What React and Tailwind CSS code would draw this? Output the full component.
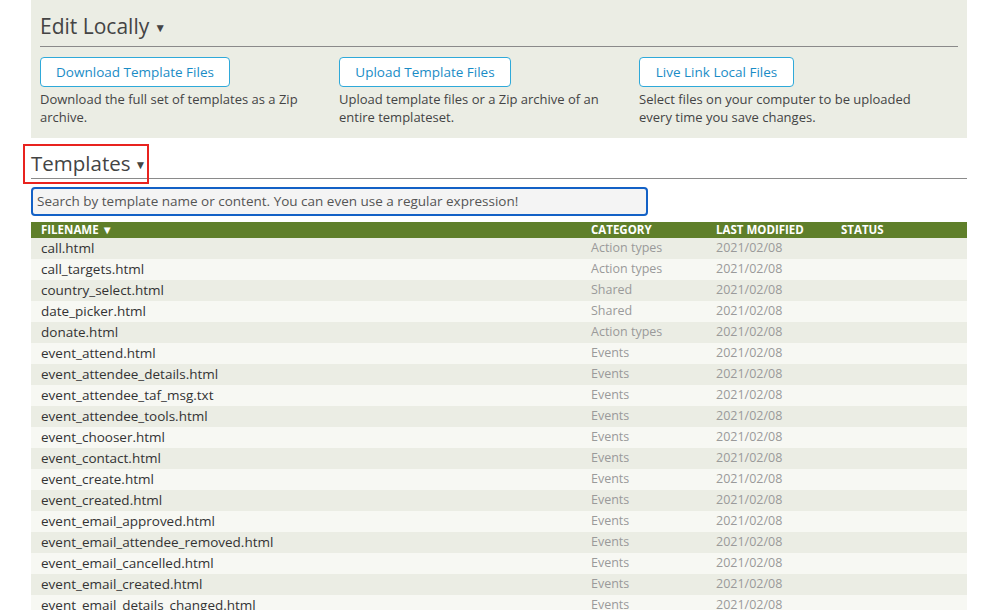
import React from "react";

const rows = [
  ["call.html", "Action types"],
  ["call_targets.html", "Action types"],
  ["country_select.html", "Shared"],
  ["date_picker.html", "Shared"],
  ["donate.html", "Action types"],
  ["event_attend.html", "Events"],
  ["event_attendee_details.html", "Events"],
  ["event_attendee_taf_msg.txt", "Events"],
  ["event_attendee_tools.html", "Events"],
  ["event_chooser.html", "Events"],
  ["event_contact.html", "Events"],
  ["event_create.html", "Events"],
  ["event_created.html", "Events"],
  ["event_email_approved.html", "Events"],
  ["event_email_attendee_removed.html", "Events"],
  ["event_email_cancelled.html", "Events"],
  ["event_email_created.html", "Events"],
  ["event_email_details_changed.html", "Events"],
  ["event_email_host_message.html", "Events"],
];

const actions = [
  ["Download Template Files", "Download the full set of templates as a Zip archive.", "w-[190px]"],
  ["Upload Template Files", "Upload template files or a Zip archive of an entire templateset.", "w-[172px]"],
  ["Live Link Local Files", "Select files on your computer to be uploaded every time you save changes.", "w-[155px]"],
];

export default function App() {
  return (
    <div className="min-h-screen bg-white font-['Open_Sans',sans-serif] text-[#444]">
      <div className="ml-[31px] w-[936px]">
        <div className="bg-[#ebede4] pl-[9px] pr-[9px] pt-[11px] pb-[12px]">
          <div className="flex items-center border-b border-[#8a8a8a] pb-[6px] h-[36px]">
            <span className="text-[21px] leading-[30px] text-[#444]">Edit Locally</span>
            <span className="ml-[5px] mt-[5px] text-[12px] text-[#444]">▼</span>
          </div>
          <div className="mt-[10px] grid grid-cols-[299px_300px_1fr]">
            {actions.map(([label, desc, w]) => (
              <div key={label} className="pr-[20px]">
                <div className={`${w} h-[30px] flex items-center justify-center rounded-[4px] border border-[#2fa9d9] bg-white text-[13.5px] text-[#1a8cc6]`}>
                  {label}
                </div>
                <p className="mt-[3px] w-[280px] text-[13px] leading-[18px] text-[#444]">{desc}</p>
              </div>
            ))}
          </div>
        </div>

        <div className="mt-[7px] relative">
          <div className="flex items-center h-[34px] border-b border-[#8a8a8a]">
            <span className="mt-[2px] text-[20.5px] leading-[30px] text-[#444]">Templates</span>
            <span className="ml-[4px] mt-[7px] text-[12px] text-[#444]">▼</span>
          </div>
          <div className="absolute left-[-8px] top-[-1px] w-[126px] h-[40px] border-2 border-[#e8231f]" />
        </div>

        <div className="mt-[8px] w-[617px] h-[29px] rounded-[4px] border-2 border-[#1361c6] bg-[#f4f4f4] flex items-center pl-[4px] text-[13.5px] text-[#555]">
          Search by template name or content. You can even use a regular expression!
        </div>

        <div className="mt-[6px]">
          <div className="grid grid-cols-[550px_125px_125px_1fr] pl-[10px] h-[16px] items-center bg-[#5f7f2a] text-[11.5px] font-bold text-white leading-[16px]">
            <span>FILENAME ▼</span>
            <span>CATEGORY</span>
            <span>LAST MODIFIED</span>
            <span>STATUS</span>
          </div>
          {rows.map(([name, cat], i) => (
            <div
              key={name}
              className={`grid grid-cols-[550px_125px_125px_1fr] pl-[10px] h-[21px] items-center ${i % 2 === 0 ? "bg-[#ebede4]" : "bg-[#f7f8f3]"}`}
            >
              <span className="text-[13.5px] text-[#333]">{name}</span>
              <span className="text-[12.5px] text-[#9a9a9a]">{cat}</span>
              <span className="text-[12.5px] text-[#9a9a9a]">2021/02/08</span>
              <span />
            </div>
          ))}
        </div>
      </div>
    </div>
  );
}
